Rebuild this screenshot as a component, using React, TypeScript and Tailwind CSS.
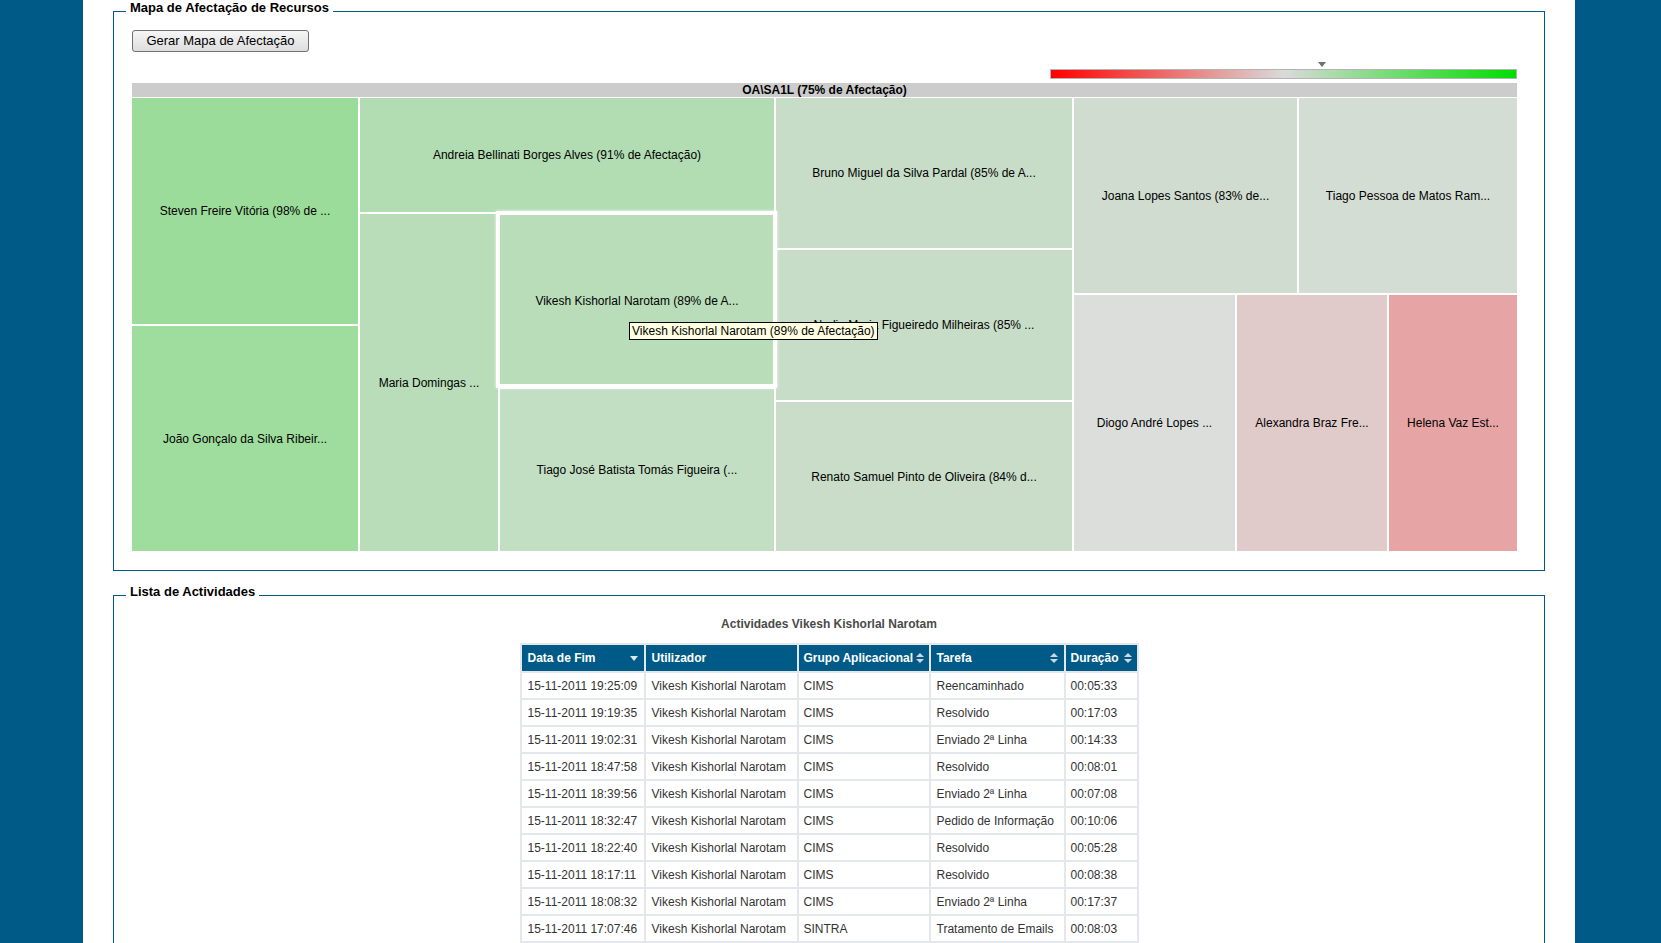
import { ReactNode } from 'react';

type CellProps = { className: string; label: string };

function Cell({ className, label }: CellProps) {
  return (
    <div className={`flex items-center justify-center overflow-hidden whitespace-nowrap text-[12px] text-black ${className}`}>
      {label}
    </div>
  );
}

function Fieldset({ title, className, children }: { title: string; className: string; children: ReactNode }) {
  return (
    <div className={`relative border border-[#005a87] ${className}`}>
      <span className="absolute -top-[12px] left-[12px] bg-white px-[4px] text-[13px] font-bold leading-[15px] text-black">
        {title}
      </span>
      {children}
    </div>
  );
}

function SortBoth() {
  return (
    <svg width="8" height="10" viewBox="0 0 8 10" className="shrink-0">
      <polygon points="0,4 4,0 8,4" fill="#cfd8e2" />
      <polygon points="0,6 8,6 4,10" fill="#cfd8e2" />
    </svg>
  );
}

function SortDesc() {
  return (
    <svg width="8" height="5" viewBox="0 0 8 5" className="shrink-0">
      <polygon points="0,0 8,0 4,5" fill="#dfe6ee" />
    </svg>
  );
}

const rows = [
  ['15-11-2011 19:25:09', 'CIMS', 'Reencaminhado', '00:05:33'],
  ['15-11-2011 19:19:35', 'CIMS', 'Resolvido', '00:17:03'],
  ['15-11-2011 19:02:31', 'CIMS', 'Enviado 2ª Linha', '00:14:33'],
  ['15-11-2011 18:47:58', 'CIMS', 'Resolvido', '00:08:01'],
  ['15-11-2011 18:39:56', 'CIMS', 'Enviado 2ª Linha', '00:07:08'],
  ['15-11-2011 18:32:47', 'CIMS', 'Pedido de Informação', '00:10:06'],
  ['15-11-2011 18:22:40', 'CIMS', 'Resolvido', '00:05:28'],
  ['15-11-2011 18:17:11', 'CIMS', 'Resolvido', '00:08:38'],
  ['15-11-2011 18:08:32', 'CIMS', 'Enviado 2ª Linha', '00:17:37'],
  ['15-11-2011 17:07:46', 'SINTRA', 'Tratamento de Emails', '00:08:03'],
];

export default function App() {
  return (
    <div className="min-h-screen bg-[#005a87] font-['Liberation_Sans',Arial,sans-serif]">
      <div className="ml-[83px] min-h-screen w-[1492px] bg-white pt-[11px] pb-[20px]">
        {/* resource map */}
        <Fieldset title="Mapa de Afectação de Recursos" className="mx-[30px] pt-[18px] pb-[19px] pl-[18px]">
          <button className="block h-[22px] w-[177px] rounded-[3px] border border-[#707070] bg-[linear-gradient(#f6f6f6,#dddddd)] text-[13px] leading-[20px] text-black">
            Gerar Mapa de Afectação
          </button>

          <div className="w-[1385px]">
            <div className="relative ml-auto mt-[17px] h-[10px] w-[467px] border border-[#b4b4b4] bg-[linear-gradient(to_right,#ff0000,#dadada_50%,#00dd00)]">
              <svg width="8" height="5" viewBox="0 0 8 5" className="absolute -top-[8px] left-[267px]">
                <polygon points="0,0 8,0 4,5" fill="#707070" />
              </svg>
            </div>

            <div className="relative mt-[4px]">
              <div className="h-[14px] bg-[#cccccc] text-center text-[12px] font-bold leading-[14px] text-black">
                OA\SA1L (75% de Afectação)
              </div>
              <div className="mt-[1px] flex h-[453px] gap-[2px] bg-white">
                <div className="flex w-[226px] flex-col gap-[2px]">
                  <Cell className="h-[226px] bg-[#9cdc9b]" label="Steven Freire Vitória (98% de ..." />
                  <Cell className="flex-1 bg-[#9fdd9e]" label="João Gonçalo da Silva Ribeir..." />
                </div>
                <div className="flex w-[414px] flex-col gap-[2px]">
                  <Cell className="h-[114px] bg-[#b2dcb2]" label="Andreia Bellinati Borges Alves (91% de Afectação)" />
                  <div className="flex flex-1 gap-[2px]">
                    <Cell className="w-[138px] bg-[#b9ddb9]" label="Maria Domingas ..." />
                    <div className="flex flex-1 flex-col gap-[2px]">
                      <div className="relative h-[173px]">
                        <Cell className="h-full bg-[#b9ddb9]" label="Vikesh Kishorlal Narotam (89% de A..." />
                        <div className="absolute -top-[3px] -left-[4px] -right-[3px] -bottom-[1px] border-[4px] border-white shadow-[0_0_3px_rgba(255,255,255,0.9)]" />
                      </div>
                      <Cell className="flex-1 bg-[#c3dfc3]" label="Tiago José Batista Tomás Figueira (..." />
                    </div>
                  </div>
                </div>
                <div className="flex w-[296px] flex-col gap-[2px]">
                  <Cell className="h-[150px] bg-[#c8ddc8]" label="Bruno Miguel da Silva Pardal (85% de A..." />
                  <Cell className="h-[150px] bg-[#c8ddc8]" label="Nadia Maria Figueiredo Milheiras (85% ..." />
                  <Cell className="flex-1 bg-[#c9ddc9]" label="Renato Samuel Pinto de Oliveira (84% d..." />
                </div>
                <div className="flex flex-1 flex-col gap-[2px]">
                  <div className="flex h-[195px] gap-[2px]">
                    <Cell className="w-[223px] bg-[#cfdccf]" label="Joana Lopes Santos (83% de..." />
                    <Cell className="flex-1 bg-[#d4ddd4]" label="Tiago Pessoa de Matos Ram..." />
                  </div>
                  <div className="flex flex-1 gap-[2px]">
                    <Cell className="w-[161px] bg-[#dbdedb]" label="Diogo André Lopes ..." />
                    <Cell className="w-[150px] bg-[#e0caca]" label="Alexandra Braz Fre..." />
                    <Cell className="flex-1 bg-[#e6a4a4]" label="Helena Vaz Est..." />
                  </div>
                </div>
              </div>

              <div className="absolute left-[497px] top-[239px] h-[18px] border border-black bg-[#ffffe1] px-[2px] text-[12px] leading-[16px] whitespace-nowrap text-black">
                Vikesh Kishorlal Narotam (89% de Afectação)
              </div>
            </div>
          </div>
        </Fieldset>

        {/* activity list */}
        <Fieldset title="Lista de Actividades" className="mx-[30px] mt-[24px] pt-[21px] pb-[30px]">
          <p className="text-center text-[12px] font-bold leading-[14px] text-[#4a4a4a]">
            Actividades Vikesh Kishorlal Narotam
          </p>
          <table className="mx-auto mt-[12px] table-fixed border-separate border-spacing-[2px] bg-[#e4e8ed] text-left text-[12px] text-[#333]">
            <thead>
              <tr className="h-[26px] bg-[#005a87] text-white">
                <th className="w-[122px] px-[6px] font-bold">
                  <div className="flex items-center justify-between">Data de Fim <SortDesc /></div>
                </th>
                <th className="w-[151px] px-[6px] font-bold">Utilizador</th>
                <th className="w-[130px] px-[5px] font-bold">
                  <div className="flex items-center justify-between">Grupo Aplicacional <SortBoth /></div>
                </th>
                <th className="w-[133px] px-[6px] font-bold">
                  <div className="flex items-center justify-between">Tarefa <SortBoth /></div>
                </th>
                <th className="w-[71px] px-[5px] font-bold">
                  <div className="flex items-center justify-between">Duração <SortBoth /></div>
                </th>
              </tr>
            </thead>
            <tbody>
              {rows.map((r) => (
                <tr key={r[0]} className="h-[25px] bg-white">
                  <td className="px-[6px] whitespace-nowrap">{r[0]}</td>
                  <td className="px-[6px] whitespace-nowrap">Vikesh Kishorlal Narotam</td>
                  <td className="px-[5px] whitespace-nowrap">{r[1]}</td>
                  <td className="px-[6px] whitespace-nowrap">{r[2]}</td>
                  <td className="px-[5px] whitespace-nowrap">{r[3]}</td>
                </tr>
              ))}
            </tbody>
          </table>
        </Fieldset>
      </div>
    </div>
  );
}
